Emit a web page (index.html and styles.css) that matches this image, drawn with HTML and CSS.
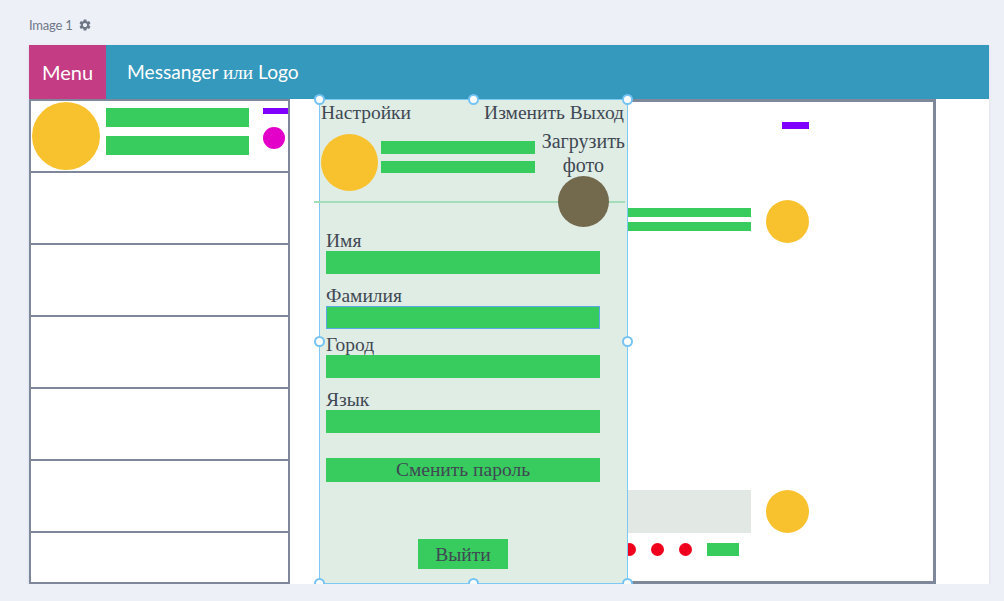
FILE: index.html
```html
<!DOCTYPE html>
<html lang="ru">
<head>
<meta charset="utf-8">
<title>Messanger</title>
<link rel="stylesheet" href="styles.css">
</head>
<body>
<div class="page">
  <div class="caption">
    <span>Image 1</span>
    <svg class="gear" viewBox="0 0 24 24" aria-hidden="true"><path d="M19.14 12.94c.04-.3.06-.61.06-.94 0-.32-.02-.64-.07-.94l2.03-1.58c.18-.14.23-.41.12-.61l-1.92-3.32c-.12-.22-.37-.29-.59-.22l-2.39.96c-.5-.38-1.030-.7-1.62-.94l-.36-2.540c-.04-.24-.24-.41-.48-.41h-3.84c-.24 0-.43.17-.47.41l-.36 2.54c-.59.24-1.13.57-1.62.94l-2.39-.96c-.22-.08-.47 0-.59.22L2.74 8.87c-.12.21-.08.47.12.61l2.03 1.58c-.05.3-.09.63-.09.94s.02.64.07.94l-2.030 1.58c-.18.14-.23.41-.12.61l1.92 3.32c.12.22.37.29.59.22l2.39-.96c.5.38 1.03.7 1.62.94l.36 2.54c.05.24.24.41.48.41h3.84c.24 0 .44-.17.47-.41l.36-2.54c.59-.24 1.13-.56 1.62-.94l2.39.96c.22.08.47 0 .59-.22l1.92-3.32c.12-.22.07-.47-.12-.61l-2.01-1.58zM12 15.6c-1.98 0-3.6-1.62-3.6-3.6s1.62-3.6 3.6-3.6 3.6 1.62 3.6 3.6-1.62 3.6-3.6 3.6z"/></svg>
  </div>

  <div class="canvas">
    <header class="topbar">
      <div class="menu">Menu</div>
      <div class="brand">Messanger <span class="serif">или</span> Logo</div>
    </header>

    <div class="workspace">
      <aside class="chats">
        <div class="chat">
          <div class="avatar avatar--chat"></div>
          <div class="chat-lines">
            <div class="bar bar--chat"></div>
            <div class="bar bar--chat"></div>
          </div>
          <div class="chat-meta">
            <div class="dash"></div>
            <div class="badge"></div>
          </div>
        </div>
        <div class="chat"></div>
        <div class="chat"></div>
        <div class="chat"></div>
        <div class="chat"></div>
        <div class="chat"></div>
        <div class="chat chat--last"></div>
      </aside>

      <section class="conversation">
        <div class="dash dash--conv"></div>
        <div class="message">
          <div class="message-lines">
            <div class="bar bar--msg"></div>
            <div class="bar bar--msg"></div>
          </div>
          <div class="avatar avatar--msg"></div>
        </div>
        <div class="composer">
          <div class="composer-input"></div>
          <div class="avatar avatar--msg"></div>
        </div>
        <div class="toolbar">
          <span class="dot"></span>
          <span class="dot"></span>
          <span class="dot"></span>
          <span class="dot"></span>
          <span class="send"></span>
        </div>
      </section>

      <div class="settings">
        <div class="settings-head">
          <span>Настройки</span>
          <span>Изменить Выход</span>
        </div>
        <div class="profile">
          <div class="avatar avatar--profile"></div>
          <div class="profile-lines">
            <div class="bar bar--profile"></div>
            <div class="bar bar--profile"></div>
          </div>
          <div class="upload">
            <div class="upload-text">Загрузить<br>фото</div>
            <div class="photo"></div>
          </div>
        </div>
        <div class="divider"></div>
        <div class="form">
          <div class="field">
            <div class="field-label">Имя</div>
            <div class="field-input"></div>
          </div>
          <div class="field">
            <div class="field-label">Фамилия</div>
            <div class="field-input field-input--focus"></div>
          </div>
          <div class="field field--tight">
            <div class="field-label">Город</div>
            <div class="field-input"></div>
          </div>
          <div class="field">
            <div class="field-label">Язык</div>
            <div class="field-input"></div>
          </div>
          <div class="btn-wide">Сменить пароль</div>
        </div>
        <div class="btn-logout">Выйти</div>

        <span class="handle h-tl"></span>
        <span class="handle h-tc"></span>
        <span class="handle h-tr"></span>
        <span class="handle h-ml"></span>
        <span class="handle h-mr"></span>
        <span class="handle h-bl"></span>
        <span class="handle h-bc"></span>
        <span class="handle h-br"></span>
      </div>
    </div>
  </div>
</div>
</body>
</html>
```

FILE: styles.css
```css
* { box-sizing: border-box; }

html, body {
  margin: 0;
  padding: 0;
  background: #edf0f7;
}

.page {
  padding: 17px 15px 0 29px;
  font-family: "Lato", "Liberation Sans", sans-serif;
}

/* caption */
.caption {
  height: 16px;
  margin-bottom: 12px;
  display: flex;
  align-items: center;
  gap: 5px;
  font-size: 13px;
  line-height: 16px;
  color: #6f7787;
  letter-spacing: -0.2px;
}
.gear {
  width: 14px;
  height: 14px;
  fill: #6f7787;
}

/* canvas */
.canvas {
  width: 960px;
  background: #ffffff;
  box-shadow: 0 1px 3px rgba(60, 70, 100, 0.12);
}

.topbar {
  height: 54px;
  display: flex;
  background: #3598bd;
  color: #ffffff;
  font-size: 20px;
  line-height: 54px;
}
.menu {
  width: 77px;
  background: #c43c84;
  text-align: center;
}
.brand {
  padding-left: 21px;
  font-size: 19.2px;
}
.serif {
  font-family: "Liberation Serif", "Times New Roman", serif;
}

.workspace {
  position: relative;
  display: flex;
  height: 485px;
}

/* chat list */
.chats {
  width: 261px;
  border: 2px solid #7f879b;
  display: flex;
  flex-direction: column;
}
.chat {
  height: 72px;
  flex: none;
  border-bottom: 2px solid #7f879b;
  display: flex;
  align-items: flex-start;
}
.chat--last {
  flex: 1;
  border-bottom: none;
}

.avatar {
  flex: none;
  border-radius: 50%;
  background: #f8c22f;
}
.avatar--chat {
  width: 68px;
  height: 68px;
  margin: 1px 0 0 1px;
}
.chat-lines {
  margin: 7px 0 0 6px;
  display: flex;
  flex-direction: column;
  gap: 9px;
}
.bar {
  background: #38cb5e;
}
.bar--chat {
  width: 143px;
  height: 19px;
}
.chat-meta {
  margin: 7px 0 0 14px;
  display: flex;
  flex-direction: column;
}
.dash {
  width: 25px;
  height: 6px;
  background: #7f00ff;
}
.badge {
  width: 22px;
  height: 22px;
  margin-top: 13px;
  border-radius: 50%;
  background: #e300c8;
}

/* conversation */
.conversation {
  width: 616px;
  margin-left: 30px;
  border: 3px solid #7f879b;
  display: flex;
  flex-direction: column;
  align-items: flex-end;
  padding-right: 124px;
}
.dash--conv {
  width: 27px;
  height: 7px;
  margin-top: 20px;
}
.message {
  margin-top: 71px;
  display: flex;
  align-items: flex-start;
  gap: 15px;
}
.message-lines {
  margin-top: 8px;
  display: flex;
  flex-direction: column;
  gap: 5px;
}
.bar--msg {
  width: 240px;
  height: 9px;
}
.avatar--msg {
  width: 43px;
  height: 43px;
}
.composer {
  margin-top: 247px;
  display: flex;
  gap: 15px;
}
.composer-input {
  width: 300px;
  height: 43px;
  background: #e2e8e4;
}
.toolbar {
  margin: 10px 70px 0 0;
  display: flex;
  align-items: center;
  gap: 15px;
}
.dot {
  width: 13px;
  height: 13px;
  border-radius: 50%;
  background: #f0001c;
}
.send {
  width: 32px;
  height: 13px;
  background: #38cb5e;
}

/* settings overlay */
.settings {
  position: absolute;
  left: 290px;
  top: 0;
  width: 309px;
  height: 485px;
  background: #e0ede5;
  border: 1px solid #7ec8f4;
  display: flex;
  flex-direction: column;
  font-family: "Liberation Serif", "Times New Roman", serif;
  font-size: 19.5px;
  color: #3f4853;
}
.settings-head {
  margin-top: 3px;
  padding: 0 3px 0 1px;
  height: 19px;
  line-height: 20px;
  display: flex;
  justify-content: space-between;
}
.profile {
  margin-top: 7px;
  display: flex;
  align-items: flex-start;
}
.avatar--profile {
  width: 57px;
  height: 57px;
  margin: 5px 0 0 1px;
}
.profile-lines {
  margin: 12px 0 0 3px;
  display: flex;
  flex-direction: column;
  gap: 7px;
}
.bar--profile {
  width: 154px;
  height: 12.5px;
}
.upload {
  margin: 0 2px -26px auto;
  display: flex;
  flex-direction: column;
  align-items: center;
}
.upload-text {
  text-align: center;
  line-height: 24px;
  font-size: 20px;
}
.photo {
  position: relative;
  z-index: 1;
  width: 51px;
  height: 51px;
  margin-top: -1px;
  border-radius: 50%;
  background: #736a4e;
}
.divider {
  height: 2px;
  margin: 0 2px 0 -6px;
  background: #a3ddb9;
}
.form {
  margin: 27px 0 0 6px;
  width: 274px;
  display: flex;
  flex-direction: column;
}
.field {
  margin-top: 11px;
}
.field:first-child {
  margin-top: 0;
}
.field--tight {
  margin-top: 5px;
}
.field-label {
  line-height: 22px;
  margin-bottom: -1px;
}
.field-input {
  height: 23px;
  background: #38cb5e;
}
.field-input--focus {
  border: 1px solid #5aa9e6;
}
.btn-wide {
  margin-top: 25px;
  height: 24px;
  line-height: 24px;
  text-align: center;
  background: #38cb5e;
}
.btn-logout {
  margin: auto 0 14px 98px;
  width: 90px;
  height: 30px;
  line-height: 31px;
  text-align: center;
  background: #38cb5e;
}

/* selection handles */
.handle {
  position: absolute;
  width: 11px;
  height: 11px;
  border-radius: 50%;
  background: #ffffff;
  border: 2px solid #74c3f2;
  z-index: 2;
}
.h-tl { top: -6px; left: -6px; }
.h-tc { top: -6px; left: 50%; margin-left: -6px; }
.h-tr { top: -6px; right: -6px; }
.h-ml { top: 50%; left: -6px; margin-top: -6px; }
.h-mr { top: 50%; right: -6px; margin-top: -6px; }
.h-bl { bottom: -6px; left: -6px; }
.h-bc { bottom: -6px; left: 50%; margin-left: -6px; }
.h-br { bottom: -6px; right: -6px; }
```
